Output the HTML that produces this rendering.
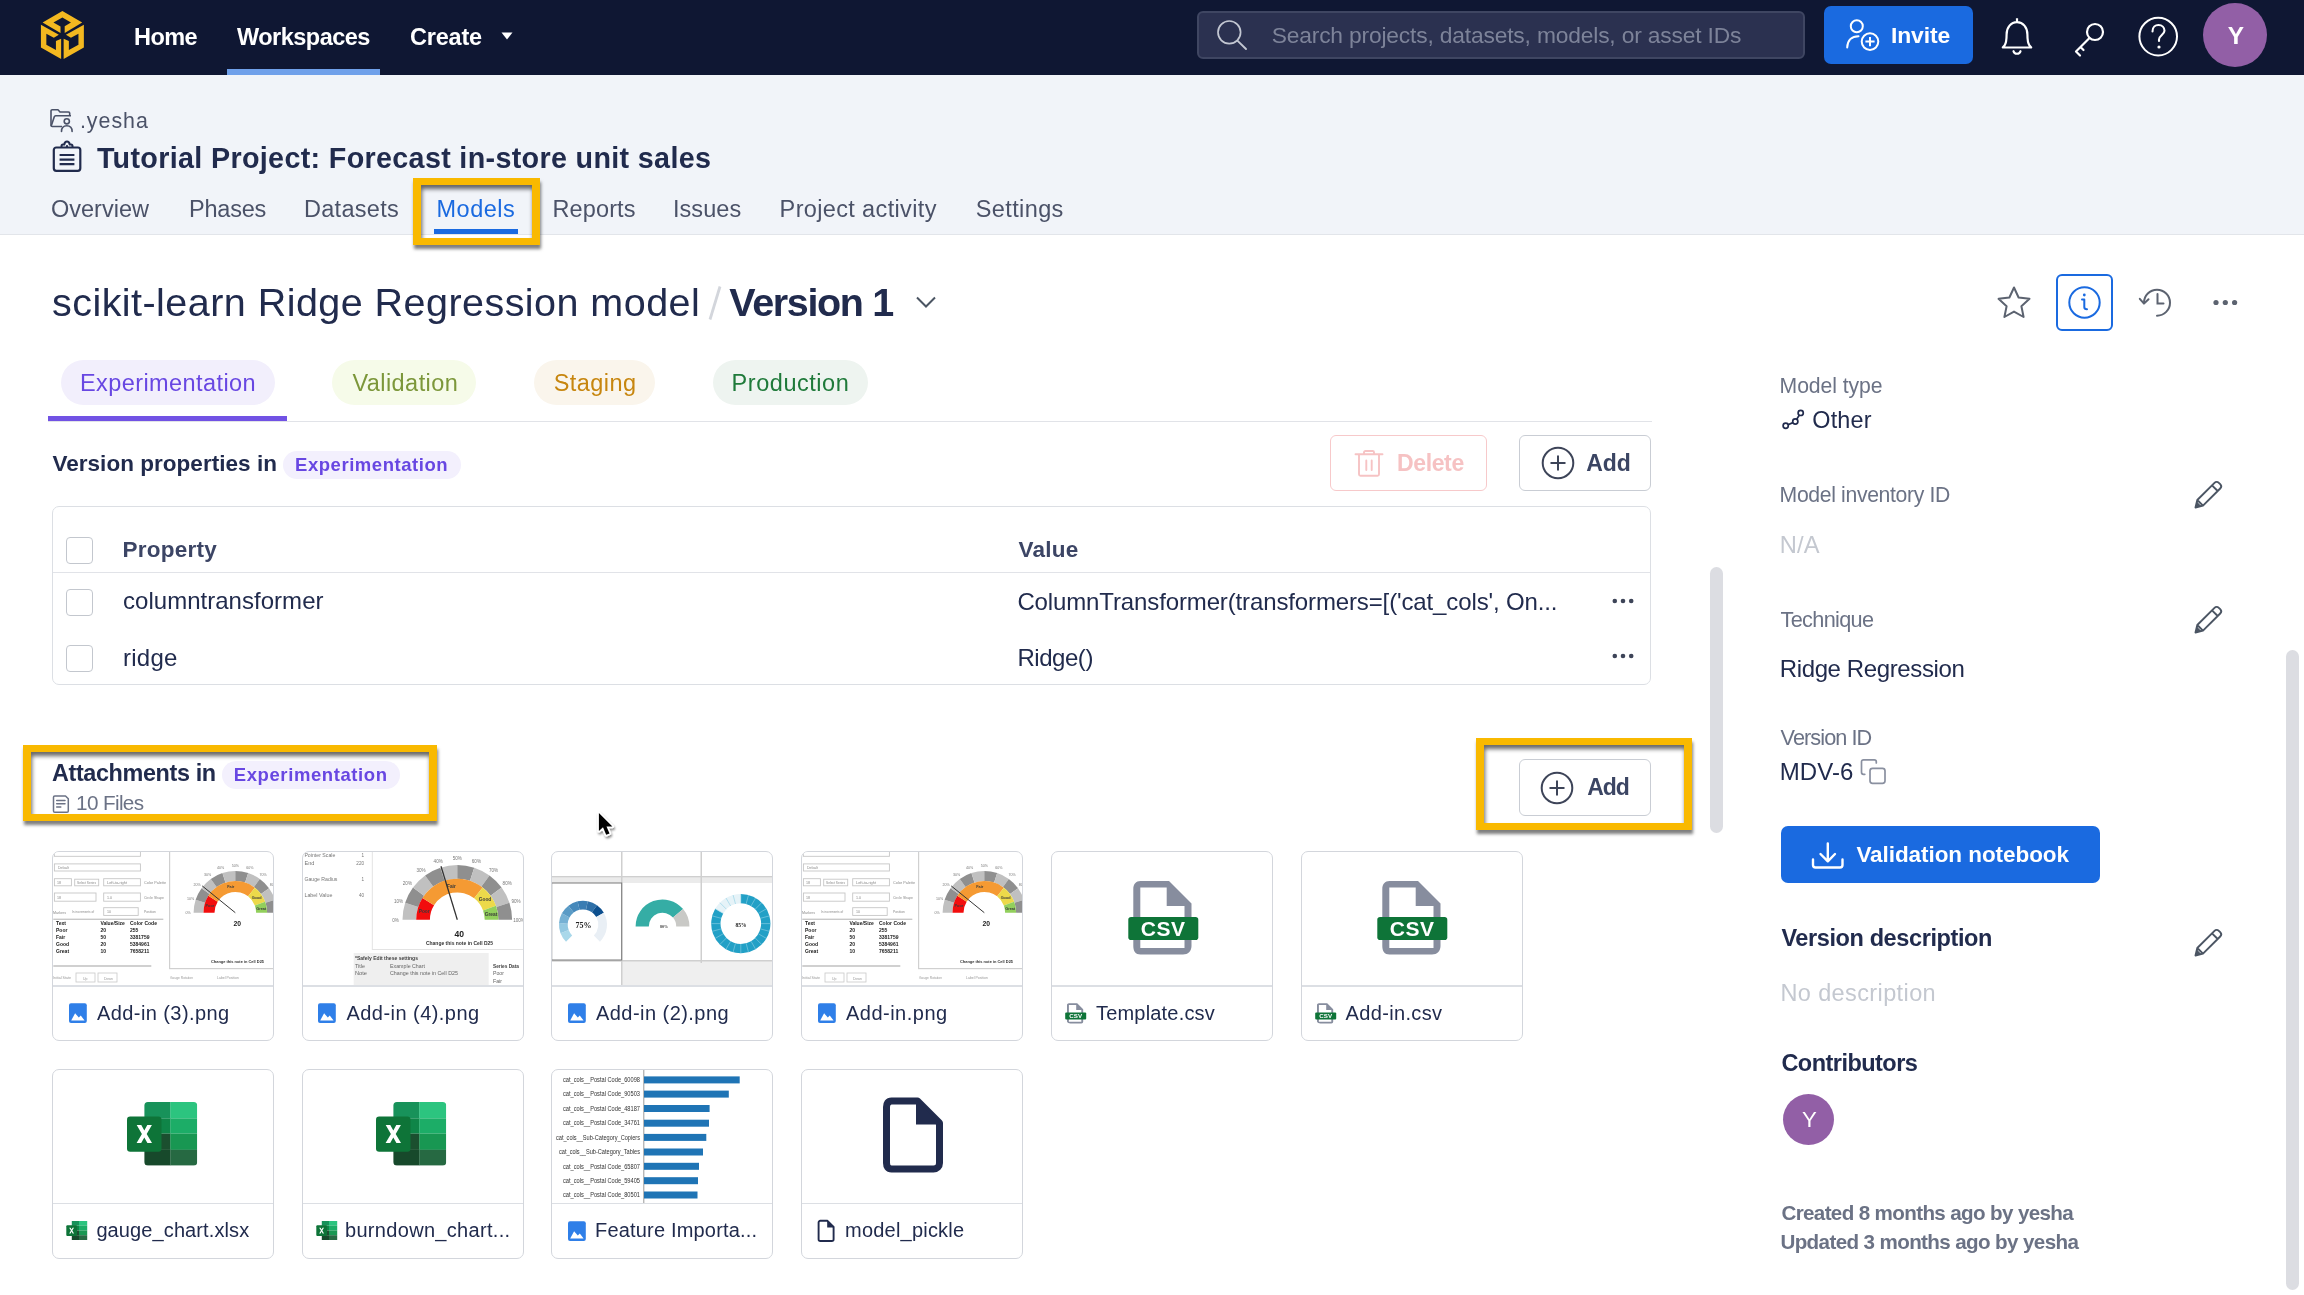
<!DOCTYPE html>
<html><head><meta charset="utf-8"><title>Model version</title>
<style>
html,body{margin:0;padding:0;width:2304px;height:1295px;overflow:hidden;background:#fff;font-family:"Liberation Sans",sans-serif}
.t{position:absolute;white-space:nowrap}
svg{display:block}
</style></head><body>
<div style="position:absolute;left:0;top:0;width:2304px;height:1295px;will-change:transform"><div style="position:absolute;left:0;top:0;width:2304px;height:75px;background:#0f1733"></div><svg style="position:absolute;left:38px;top:8px" width="50" height="54" viewBox="0 0 1199 1295">
<g fill="#f3b820">
<path d="M585 70 L1060 350 L640 598 L640 435 L790 350 L585 225 L370 350 L540 445 L540 598 L110 350 Z"/>
<path d="M70 400 L500 640 L380 715 L200 620 L200 880 L430 1005 L430 790 L555 735 L555 1225 L70 945 Z"/>
<path d="M1100 400 L670 640 L790 715 L970 620 L970 880 L740 1005 L740 790 L615 735 L615 1225 L1100 945 Z"/>
</g></svg><svg style="position:absolute;left:500px;top:31px" width="14" height="10" viewBox="0 0 14 10"><path d="M1.5 1.5 L12.5 1.5 L7 8.5 Z" fill="#fff"/></svg><div style="position:absolute;left:227px;top:69px;width:153px;height:6px;background:#6fa0ea"></div><div style="position:absolute;left:1197px;top:11px;width:604px;height:44px;background:#2b3150;border:2px solid #3f4662;border-radius:6px"></div><svg style="position:absolute;left:1210px;top:14px" width="44" height="40" viewBox="0 0 44 40"><circle cx="19.3" cy="18.3" r="11.3" fill="none" stroke="#c3c7d2" stroke-width="1.7"/><path d="M27.4 26.6 L36 35" stroke="#c3c7d2" stroke-width="1.9" stroke-linecap="round"/></svg><div style="position:absolute;left:1824px;top:6px;width:149px;height:58px;background:#1a6ae0;border-radius:7px"></div><svg style="position:absolute;left:1844px;top:17px" width="40" height="38" viewBox="0 0 40 38">
<circle cx="12.8" cy="9.3" r="6" fill="none" stroke="#fff" stroke-width="2"/>
<path d="M3.2 30.5 C3.5 23 8 19.2 14.5 19.2" fill="none" stroke="#fff" stroke-width="2" stroke-linecap="round"/>
<circle cx="26" cy="24.6" r="8.3" fill="none" stroke="#fff" stroke-width="2"/>
<path d="M26 20 V29.2 M21.4 24.6 H30.6" stroke="#fff" stroke-width="2"/></svg><svg style="position:absolute;left:1998px;top:15px" width="38" height="44" viewBox="0 0 38 44">
<path d="M19 3.2 V6.8 M4.8 32.5 L6.5 30.5 C8.2 28.3 8.6 25.5 8.6 19.5 C8.6 12.2 13 7.2 19 7.2 C25 7.2 29.4 12.2 29.4 19.5 C29.4 25.5 29.8 28.3 31.5 30.5 L33.2 32.5 Z" fill="none" stroke="#fff" stroke-width="2.2" stroke-linejoin="round"/>
<path d="M15.5 36.2 C16.5 39.6 21.5 39.6 22.5 36.2" fill="none" stroke="#fff" stroke-width="2.2" stroke-linecap="round"/></svg><svg style="position:absolute;left:2070px;top:18px" width="40" height="40" viewBox="0 0 40 40">
<circle cx="25" cy="14" r="8" fill="none" stroke="#fff" stroke-width="2.2"/>
<path d="M19.5 20 L6 33.5 M6 33.5 L10 37.5 M10.5 29 L13.5 32" fill="none" stroke="#fff" stroke-width="2.2" stroke-linecap="round"/></svg><svg style="position:absolute;left:2136px;top:14px" width="46" height="46" viewBox="0 0 46 46">
<circle cx="22.2" cy="22.6" r="18.8" fill="none" stroke="#fff" stroke-width="2"/>
<path d="M16.5 17.5 C16.5 13 19.5 11 22.5 11 C26 11 28.5 13.5 28.5 16.8 C28.5 20.5 23 21.5 23 25.5 V27" fill="none" stroke="#fff" stroke-width="2.1" stroke-linecap="round"/>
<circle cx="23" cy="33" r="1.6" fill="#fff"/></svg><div style="position:absolute;left:2203px;top:3px;width:64px;height:64px;border-radius:50%;background:#925fa6"></div><div style="position:absolute;left:0;top:75px;width:2304px;height:159px;background:#f1f4f9;border-bottom:1px solid #e2e5ea"></div><svg style="position:absolute;left:49px;top:107px" width="28" height="26" viewBox="0 0 28 26">
<path d="M13 19.5 H3.2 C2.5 19.5 2 19 2 18.3 V4 C2 3.3 2.5 2.8 3.2 2.8 H9 L11 5 H19.5 C20.2 5 20.7 5.5 20.7 6.2 V8.5" fill="none" stroke="#4b5268" stroke-width="1.6" stroke-linejoin="round"/>
<path d="M2.2 19 L5.3 9.8 C5.5 9.2 6 8.8 6.7 8.8 H22" fill="none" stroke="#4b5268" stroke-width="1.6" stroke-linejoin="round"/>
<circle cx="17.8" cy="14.3" r="2.6" fill="none" stroke="#4b5268" stroke-width="1.6"/>
<path d="M12.5 24.5 C12.5 20.8 14.8 18.8 17.8 18.8 C20.8 18.8 23.1 20.8 23.1 24.5" fill="none" stroke="#4b5268" stroke-width="1.6" stroke-linecap="round"/>
</svg><svg style="position:absolute;left:50px;top:139px" width="34" height="35" viewBox="0 0 34 35">
<rect x="3.8" y="8.5" width="26.5" height="23.3" rx="2.5" fill="none" stroke="#212b4d" stroke-width="2.2"/>
<path d="M11.5 8.5 V7 C11.5 6 12.2 5.5 13 5.5 H14.3 C14.6 3.6 15.6 2.6 17 2.6 C18.4 2.6 19.4 3.6 19.7 5.5 H21 C21.8 5.5 22.5 6 22.5 7 V8.5" fill="none" stroke="#212b4d" stroke-width="2" stroke-linejoin="round"/>
<circle cx="17" cy="7.2" r="1.1" fill="#212b4d"/>
<path d="M9.6 16 H24.4 M9.6 20.6 H24.4 M9.6 25.2 H24.4" stroke="#212b4d" stroke-width="2.2"/>
</svg><div style="position:absolute;left:434px;top:229px;width:84px;height:5px;background:#1a6ae0"></div><svg style="position:absolute;left:700px;top:280px" width="30" height="46" viewBox="0 0 30 46"><path d="M20 6.5 L10 39.5" stroke="#d3d6dc" stroke-width="2.8"/></svg><svg style="position:absolute;left:912px;top:292px" width="28" height="20" viewBox="0 0 28 20"><path d="M5 5.5 L14 14.5 L23 5.5" fill="none" stroke="#4b5563" stroke-width="2"/></svg><svg style="position:absolute;left:1992px;top:282px" width="44" height="44" viewBox="0 0 44 44">
<path d="M22 5.5 L26.6 15.5 L37.5 16.8 L29.4 24.2 L31.6 35 L22 29.6 L12.4 35 L14.6 24.2 L6.5 16.8 L17.4 15.5 Z" fill="none" stroke="#5c6370" stroke-width="2" stroke-linejoin="round"/></svg><div style="position:absolute;left:2056px;top:274px;width:53px;height:53px;border:2px solid #1a6ae0;border-radius:6px"></div><svg style="position:absolute;left:2064px;top:282px" width="41" height="41" viewBox="0 0 41 41">
<circle cx="20.5" cy="20.5" r="15.2" fill="none" stroke="#1a6ae0" stroke-width="2"/>
<circle cx="20.3" cy="13" r="1.4" fill="#1a6ae0"/>
<path d="M18 17.5 H20.3 V25 C20.3 26.6 21.2 27.2 23 27.2" fill="none" stroke="#1a6ae0" stroke-width="2" stroke-linecap="round" stroke-linejoin="round"/></svg><svg style="position:absolute;left:2134px;top:283px" width="42" height="40" viewBox="0 0 42 40">
<path d="M10 19.7 A13 13 0 1 1 23 32.7" fill="none" stroke="#5c6370" stroke-width="2" stroke-linecap="round"/>
<path d="M5.8 15.8 L10 20.6 L14.5 16.2" fill="none" stroke="#5c6370" stroke-width="2" stroke-linecap="round" stroke-linejoin="round"/>
<path d="M23.5 11 V20.5 H29.5" fill="none" stroke="#5c6370" stroke-width="2" stroke-linecap="round"/></svg><svg style="position:absolute;left:2208px;top:294px" width="34" height="16" viewBox="0 0 34 16">
<circle cx="8" cy="8.5" r="2.6" fill="#5c6370"/><circle cx="17.3" cy="8.5" r="2.6" fill="#5c6370"/><circle cx="26.6" cy="8.5" r="2.6" fill="#5c6370"/></svg><div style="position:absolute;left:61px;top:360px;width:214px;height:45px;border-radius:23px;background:#f2effc"></div><div style="position:absolute;left:332px;top:360px;width:144px;height:45px;border-radius:23px;background:#f6fbe9"></div><div style="position:absolute;left:534px;top:360px;width:121px;height:45px;border-radius:23px;background:#faf5ec"></div><div style="position:absolute;left:713px;top:360px;width:155px;height:45px;border-radius:23px;background:#eef4f0"></div><div style="position:absolute;left:48px;top:421px;width:1604px;height:1px;background:#e1e3e8"></div><div style="position:absolute;left:48px;top:416px;width:239px;height:5px;background:#7152e4"></div><div style="position:absolute;left:283px;top:451px;width:178px;height:28px;border-radius:14px;background:#f3f0fd"></div><div style="position:absolute;left:1330px;top:435px;width:155px;height:54px;border:1.5px solid #f7c9ca;border-radius:6px"></div><svg style="position:absolute;left:1352px;top:448px" width="34" height="32" viewBox="0 0 34 32">
<path d="M3.5 6.3 H30.5 M12 6.3 V4.3 C12 3.5 12.6 3 13.4 3 H20.6 C21.4 3 22 3.5 22 4.3 V6.3 M7 6.3 V26.3 C7 27.2 7.6 27.8 8.5 27.8 H25.5 C26.4 27.8 27 27.2 27 26.3 V6.3 M14.3 12.5 V22 M19.7 12.5 V22" fill="none" stroke="#f6c3c4" stroke-width="1.9" stroke-linecap="round"/></svg><div style="position:absolute;left:1519px;top:435px;width:130px;height:54px;border:1.5px solid #c9cdd4;border-radius:6px;background:#fff"></div><svg style="position:absolute;left:1537.7px;top:443px" width="40" height="40" viewBox="0 0 40 40">
<circle cx="20" cy="20" r="15.3" fill="none" stroke="#3d4458" stroke-width="2"/>
<path d="M20 12.5 V27.5 M12.5 20 H27.5" stroke="#3d4458" stroke-width="2"/></svg><div style="position:absolute;left:52px;top:505.5px;width:1596.5px;height:177px;border:1.5px solid #dcdfe4;border-radius:7px"></div><div style="position:absolute;left:53px;top:571.5px;width:1597px;height:1.2px;background:#e1e3e8"></div><div style="position:absolute;left:66px;top:536.5px;width:25px;height:25px;border:1.7px solid #c3c7ce;border-radius:4px;background:#fff"></div><div style="position:absolute;left:66px;top:589px;width:25px;height:25px;border:1.7px solid #c3c7ce;border-radius:4px;background:#fff"></div><div style="position:absolute;left:66px;top:645px;width:25px;height:25px;border:1.7px solid #c3c7ce;border-radius:4px;background:#fff"></div><svg style="position:absolute;left:1608px;top:592.6px" width="30" height="16" viewBox="0 0 30 16">
<circle cx="6.8" cy="8" r="2.3" fill="#3d4458"/><circle cx="15" cy="8" r="2.3" fill="#3d4458"/><circle cx="23.2" cy="8" r="2.3" fill="#3d4458"/></svg><svg style="position:absolute;left:1608px;top:648px" width="30" height="16" viewBox="0 0 30 16">
<circle cx="6.8" cy="8" r="2.3" fill="#3d4458"/><circle cx="15" cy="8" r="2.3" fill="#3d4458"/><circle cx="23.2" cy="8" r="2.3" fill="#3d4458"/></svg><div style="position:absolute;left:222px;top:761px;width:178px;height:28px;border-radius:14px;background:#f3f0fd"></div><svg style="position:absolute;left:50px;top:793px" width="22" height="22" viewBox="0 0 22 22">
<path d="M4.8 3 H15.5 L18.3 5.8 V18 C18.3 18.8 17.8 19.3 17 19.3 H4.8 C4 19.3 3.5 18.8 3.5 18 V4.3 C3.5 3.5 4 3 4.8 3 Z" fill="none" stroke="#6b7285" stroke-width="1.5" stroke-linejoin="round"/>
<path d="M6.7 7.5 H15 M6.7 10.7 H15 M6.7 13.9 H10.8" stroke="#6b7285" stroke-width="1.5" stroke-linecap="round"/></svg><div style="position:absolute;left:1519px;top:758.5px;width:130px;height:55px;border:1.5px solid #c9cdd4;border-radius:6px;background:#fff"></div><svg style="position:absolute;left:1536.9px;top:768px" width="40" height="40" viewBox="0 0 40 40">
<circle cx="20" cy="20" r="15.3" fill="none" stroke="#3d4458" stroke-width="2"/>
<path d="M20 12.5 V27.5 M12.5 20 H27.5" stroke="#3d4458" stroke-width="2"/></svg><div style="position:absolute;left:1710px;top:567px;width:13px;height:266px;border-radius:7px;background:#dcdde2"></div><div style="position:absolute;left:2286px;top:650px;width:13px;height:640px;border-radius:7px;background:#dcdde2"></div><div style="position:absolute;left:52px;top:851px;width:220px;height:188px;border:1.5px solid #d3d6dc;border-radius:7px;overflow:hidden;background:#fff"><svg style="position:absolute;left:-1.5px;top:-1.5px;filter:blur(0.35px)" width="223" height="135" viewBox="0 0 223 135"><rect x="2.4" y="0.3" width="86" height="5" fill="#fff" stroke="#c6c6c6" stroke-width="0.9"/><rect x="2.4" y="12.9" width="86" height="7.1" fill="#fff" stroke="#c6c6c6" stroke-width="0.9"/><rect x="2.4" y="27.7" width="17" height="7.1" fill="#fff" stroke="#c6c6c6" stroke-width="0.9"/><rect x="22.7" y="28.2" width="24" height="6.6" fill="#fff" stroke="#c6c6c6" stroke-width="0.9"/><rect x="51.7" y="27.7" width="36.7" height="7.1" fill="#fff" stroke="#c6c6c6" stroke-width="0.9"/><rect x="2.4" y="42" width="41.6" height="8.2" fill="#fff" stroke="#c6c6c6" stroke-width="0.9"/><rect x="51.7" y="42" width="36.7" height="8.2" fill="#fff" stroke="#c6c6c6" stroke-width="0.9"/><rect x="51.7" y="56.7" width="34.5" height="7.7" fill="#fff" stroke="#c6c6c6" stroke-width="0.9"/><text x="6" y="17.8" font-family="Liberation Sans" font-size="3.6" font-weight="400" fill="#8a8a8a" text-anchor="start" textLength="11" lengthAdjust="spacingAndGlyphs">Default</text><text x="5" y="32.8" font-family="Liberation Sans" font-size="3.6" font-weight="400" fill="#8a8a8a" text-anchor="start" textLength="4" lengthAdjust="spacingAndGlyphs">18</text><text x="25" y="33" font-family="Liberation Sans" font-size="3.6" font-weight="400" fill="#8a8a8a" text-anchor="start" textLength="19" lengthAdjust="spacingAndGlyphs">Select Series</text><text x="55" y="32.8" font-family="Liberation Sans" font-size="3.6" font-weight="400" fill="#8a8a8a" text-anchor="start" textLength="20" lengthAdjust="spacingAndGlyphs">Left-to-right</text><text x="5" y="47.5" font-family="Liberation Sans" font-size="3.6" font-weight="400" fill="#8a8a8a" text-anchor="start" textLength="4" lengthAdjust="spacingAndGlyphs">18</text><text x="55" y="47.5" font-family="Liberation Sans" font-size="3.6" font-weight="400" fill="#8a8a8a" text-anchor="start" textLength="5" lengthAdjust="spacingAndGlyphs">1.0</text><text x="55" y="62" font-family="Liberation Sans" font-size="3.6" font-weight="400" fill="#8a8a8a" text-anchor="start" textLength="4" lengthAdjust="spacingAndGlyphs">10</text><text x="1" y="62.5" font-family="Liberation Sans" font-size="3.6" font-weight="400" fill="#8a8a8a" text-anchor="start" textLength="13" lengthAdjust="spacingAndGlyphs">Markers</text><text x="20" y="62.3" font-family="Liberation Sans" font-size="3.6" font-weight="400" fill="#8a8a8a" text-anchor="start" textLength="22" lengthAdjust="spacingAndGlyphs">In increments of</text><text x="92" y="33" font-family="Liberation Sans" font-size="3.6" font-weight="400" fill="#8a8a8a" text-anchor="start" textLength="22" lengthAdjust="spacingAndGlyphs">Color Palette</text><text x="92" y="47.5" font-family="Liberation Sans" font-size="3.6" font-weight="400" fill="#8a8a8a" text-anchor="start" textLength="20" lengthAdjust="spacingAndGlyphs">Circle Shape</text><text x="92" y="62" font-family="Liberation Sans" font-size="3.6" font-weight="400" fill="#8a8a8a" text-anchor="start" textLength="12" lengthAdjust="spacingAndGlyphs">Position</text><rect x="1.3" y="67.6" width="110" height="1.4" fill="#c8c8c8"/><text x="4" y="74.4" font-family="Liberation Sans" font-size="5" font-weight="700" fill="#222" text-anchor="start">Text</text><text x="48.4" y="74.4" font-family="Liberation Sans" font-size="5" font-weight="700" fill="#222" text-anchor="start">Value/Size</text><text x="78" y="74.4" font-family="Liberation Sans" font-size="5" font-weight="700" fill="#222" text-anchor="start">Color Code</text><text x="4" y="81.4" font-family="Liberation Sans" font-size="5" font-weight="700" fill="#222" text-anchor="start">Poor</text><text x="48.4" y="81.4" font-family="Liberation Sans" font-size="5" font-weight="700" fill="#222" text-anchor="start">20</text><text x="78" y="81.4" font-family="Liberation Sans" font-size="5" font-weight="700" fill="#222" text-anchor="start">255</text><text x="4" y="88.4" font-family="Liberation Sans" font-size="5" font-weight="700" fill="#222" text-anchor="start">Fair</text><text x="48.4" y="88.4" font-family="Liberation Sans" font-size="5" font-weight="700" fill="#222" text-anchor="start">50</text><text x="78" y="88.4" font-family="Liberation Sans" font-size="5" font-weight="700" fill="#222" text-anchor="start">3381759</text><text x="4" y="95.4" font-family="Liberation Sans" font-size="5" font-weight="700" fill="#222" text-anchor="start">Good</text><text x="48.4" y="95.4" font-family="Liberation Sans" font-size="5" font-weight="700" fill="#222" text-anchor="start">20</text><text x="78" y="95.4" font-family="Liberation Sans" font-size="5" font-weight="700" fill="#222" text-anchor="start">5384961</text><text x="4" y="102.4" font-family="Liberation Sans" font-size="5" font-weight="700" fill="#222" text-anchor="start">Great</text><text x="48.4" y="102.4" font-family="Liberation Sans" font-size="5" font-weight="700" fill="#222" text-anchor="start">10</text><text x="78" y="102.4" font-family="Liberation Sans" font-size="5" font-weight="700" fill="#222" text-anchor="start">7658211</text><rect x="1.3" y="114.3" width="98" height="1.4" fill="#bdbdbd"/><rect x="24" y="122" width="19" height="9" fill="#fff" stroke="#c9c9c9" stroke-width="0.8"/><rect x="46" y="122" width="19" height="9" fill="#fff" stroke="#c9c9c9" stroke-width="0.8"/><text x="1" y="127.5" font-family="Liberation Sans" font-size="3.5" font-weight="400" fill="#999" text-anchor="start" textLength="18" lengthAdjust="spacingAndGlyphs">Initial State</text><text x="31" y="128.5" font-family="Liberation Sans" font-size="3.5" font-weight="400" fill="#999" text-anchor="start">Up</text><text x="52" y="128.5" font-family="Liberation Sans" font-size="3.5" font-weight="400" fill="#999" text-anchor="start">Down</text><rect x="117" y="0" width="1.2" height="118" fill="#d0d0d0"/><rect x="117" y="117" width="106" height="1.2" fill="#d0d0d0"/><text x="118" y="127.5" font-family="Liberation Sans" font-size="3.5" font-weight="400" fill="#999" text-anchor="start" textLength="23" lengthAdjust="spacingAndGlyphs">Gauge Rotation</text><text x="165" y="127.5" font-family="Liberation Sans" font-size="3.5" font-weight="400" fill="#999" text-anchor="start" textLength="22" lengthAdjust="spacingAndGlyphs">Label Position</text><path d="M141.60 61.70 A41.7 41.7 0 0 1 143.64 48.81 L153.06 51.87 A31.8 31.8 0 0 0 151.50 61.70 Z" fill="#c0c0c0"/><path d="M143.64 48.81 A41.7 41.7 0 0 1 149.56 37.19 L157.57 43.01 A31.8 31.8 0 0 0 153.06 51.87 Z" fill="#8f8f8f"/><path d="M149.56 37.19 A41.7 41.7 0 0 1 158.79 27.96 L164.61 35.97 A31.8 31.8 0 0 0 157.57 43.01 Z" fill="#c0c0c0"/><path d="M158.79 27.96 A41.7 41.7 0 0 1 170.41 22.04 L173.47 31.46 A31.8 31.8 0 0 0 164.61 35.97 Z" fill="#8f8f8f"/><path d="M170.41 22.04 A41.7 41.7 0 0 1 183.30 20.00 L183.30 29.90 A31.8 31.8 0 0 0 173.47 31.46 Z" fill="#c0c0c0"/><path d="M183.30 20.00 A41.7 41.7 0 0 1 196.19 22.04 L193.13 31.46 A31.8 31.8 0 0 0 183.30 29.90 Z" fill="#8f8f8f"/><path d="M196.19 22.04 A41.7 41.7 0 0 1 207.81 27.96 L201.99 35.97 A31.8 31.8 0 0 0 193.13 31.46 Z" fill="#c0c0c0"/><path d="M207.81 27.96 A41.7 41.7 0 0 1 217.04 37.19 L209.03 43.01 A31.8 31.8 0 0 0 201.99 35.97 Z" fill="#8f8f8f"/><path d="M217.04 37.19 A41.7 41.7 0 0 1 222.96 48.81 L213.54 51.87 A31.8 31.8 0 0 0 209.03 43.01 Z" fill="#c0c0c0"/><path d="M222.96 48.81 A41.7 41.7 0 0 1 225.00 61.70 L215.10 61.70 A31.8 31.8 0 0 0 213.54 51.87 Z" fill="#8f8f8f"/><path d="M151.50 61.70 A31.8 31.8 0 0 1 156.33 44.85 L165.66 50.68 A20.8 20.8 0 0 0 162.50 61.70 Z" fill="#f20d0d"/><path d="M156.33 44.85 A31.8 31.8 0 0 1 202.88 36.64 L196.11 45.31 A20.8 20.8 0 0 0 165.66 50.68 Z" fill="#f59a33"/><path d="M202.88 36.64 A31.8 31.8 0 0 1 213.18 50.82 L202.85 54.59 A20.8 20.8 0 0 0 196.11 45.31 Z" fill="#ecd94a"/><path d="M213.18 50.82 A31.8 31.8 0 0 1 215.10 61.70 L204.10 61.70 A20.8 20.8 0 0 0 202.85 54.59 Z" fill="#92cf5c"/><text x="157.9" y="56.2" font-family="Liberation Sans" font-size="3.8" font-weight="700" fill="#3a3a3a" text-anchor="middle">Poor</text><text x="178.7" y="37.1" font-family="Liberation Sans" font-size="3.8" font-weight="700" fill="#3a3a3a" text-anchor="middle">Fair</text><text x="204.6" y="47.6" font-family="Liberation Sans" font-size="3.8" font-weight="700" fill="#3a3a3a" text-anchor="middle">Good</text><text x="209.2" y="58.5" font-family="Liberation Sans" font-size="3.8" font-weight="700" fill="#3a3a3a" text-anchor="middle">Great</text><path d="M183.3 61.7 L150.2 34.9" stroke="#333" stroke-width="0.99"/><text x="185.3" y="74.5" font-family="Liberation Sans" font-size="6.8" font-weight="700" fill="#222" text-anchor="middle">20</text><text x="136.2" y="63.0" font-family="Liberation Sans" font-size="3.6" font-weight="400" fill="#777" text-anchor="middle">0%</text><text x="138.5" y="48.5" font-family="Liberation Sans" font-size="3.6" font-weight="400" fill="#777" text-anchor="middle">10%</text><text x="145.2" y="35.4" font-family="Liberation Sans" font-size="3.6" font-weight="400" fill="#777" text-anchor="middle">20%</text><text x="155.6" y="24.9" font-family="Liberation Sans" font-size="3.6" font-weight="400" fill="#777" text-anchor="middle">30%</text><text x="168.7" y="18.3" font-family="Liberation Sans" font-size="3.6" font-weight="400" fill="#777" text-anchor="middle">40%</text><text x="183.3" y="16.0" font-family="Liberation Sans" font-size="3.6" font-weight="400" fill="#777" text-anchor="middle">50%</text><text x="197.9" y="18.3" font-family="Liberation Sans" font-size="3.6" font-weight="400" fill="#777" text-anchor="middle">60%</text><text x="211.0" y="24.9" font-family="Liberation Sans" font-size="3.6" font-weight="400" fill="#777" text-anchor="middle">70%</text><text x="221.4" y="35.4" font-family="Liberation Sans" font-size="3.6" font-weight="400" fill="#777" text-anchor="middle">80%</text><text x="228.1" y="48.5" font-family="Liberation Sans" font-size="3.6" font-weight="400" fill="#777" text-anchor="middle">90%</text><text x="230.4" y="63.1" font-family="Liberation Sans" font-size="3.6" font-weight="400" fill="#777" text-anchor="middle">100%</text><text x="159" y="112" font-family="Liberation Sans" font-size="4" font-weight="700" fill="#333" text-anchor="start" textLength="53" lengthAdjust="spacingAndGlyphs">Change this note in Cell D25</text></svg><div style="position:absolute;left:0;top:133px;width:223px;height:1.5px;background:#dcdfe4"></div></div><div style="position:absolute;left:302px;top:851px;width:220px;height:188px;border:1.5px solid #d3d6dc;border-radius:7px;overflow:hidden;background:#fff"><svg style="position:absolute;left:-1.5px;top:-1.5px;filter:blur(0.35px)" width="223" height="135" viewBox="0 0 223 135"><text x="2.4" y="6" font-family="Liberation Sans" font-size="4.6" font-weight="400" fill="#777" text-anchor="start" textLength="31" lengthAdjust="spacingAndGlyphs">Pointer Scale</text><text x="62" y="6" font-family="Liberation Sans" font-size="4.6" font-weight="400" fill="#777" text-anchor="end">1</text><text x="2.4" y="13.8" font-family="Liberation Sans" font-size="4.6" font-weight="400" fill="#777" text-anchor="start" textLength="10" lengthAdjust="spacingAndGlyphs">End</text><text x="62" y="13.8" font-family="Liberation Sans" font-size="4.6" font-weight="400" fill="#777" text-anchor="end">220</text><text x="2.4" y="29.7" font-family="Liberation Sans" font-size="4.6" font-weight="400" fill="#777" text-anchor="start" textLength="33" lengthAdjust="spacingAndGlyphs">Gauge Radius</text><text x="62" y="29.7" font-family="Liberation Sans" font-size="4.6" font-weight="400" fill="#777" text-anchor="end">1</text><text x="2.4" y="45.6" font-family="Liberation Sans" font-size="4.6" font-weight="400" fill="#777" text-anchor="start" textLength="28" lengthAdjust="spacingAndGlyphs">Label Value</text><text x="62" y="45.6" font-family="Liberation Sans" font-size="4.6" font-weight="400" fill="#777" text-anchor="end">40</text><rect x="69.8" y="0" width="1" height="98" fill="#e3e3e3"/><rect x="69.8" y="98" width="153" height="1" fill="#e3e3e3"/><path d="M100.50 68.80 A54.8 54.8 0 0 1 103.18 51.87 L116.21 56.10 A41.1 41.1 0 0 0 114.20 68.80 Z" fill="#c0c0c0"/><path d="M103.18 51.87 A54.8 54.8 0 0 1 110.97 36.59 L122.05 44.64 A41.1 41.1 0 0 0 116.21 56.10 Z" fill="#8f8f8f"/><path d="M110.97 36.59 A54.8 54.8 0 0 1 123.09 24.47 L131.14 35.55 A41.1 41.1 0 0 0 122.05 44.64 Z" fill="#c0c0c0"/><path d="M123.09 24.47 A54.8 54.8 0 0 1 138.37 16.68 L142.60 29.71 A41.1 41.1 0 0 0 131.14 35.55 Z" fill="#8f8f8f"/><path d="M138.37 16.68 A54.8 54.8 0 0 1 155.30 14.00 L155.30 27.70 A41.1 41.1 0 0 0 142.60 29.71 Z" fill="#c0c0c0"/><path d="M155.30 14.00 A54.8 54.8 0 0 1 172.23 16.68 L168.00 29.71 A41.1 41.1 0 0 0 155.30 27.70 Z" fill="#8f8f8f"/><path d="M172.23 16.68 A54.8 54.8 0 0 1 187.51 24.47 L179.46 35.55 A41.1 41.1 0 0 0 168.00 29.71 Z" fill="#c0c0c0"/><path d="M187.51 24.47 A54.8 54.8 0 0 1 199.63 36.59 L188.55 44.64 A41.1 41.1 0 0 0 179.46 35.55 Z" fill="#8f8f8f"/><path d="M199.63 36.59 A54.8 54.8 0 0 1 207.42 51.87 L194.39 56.10 A41.1 41.1 0 0 0 188.55 44.64 Z" fill="#c0c0c0"/><path d="M207.42 51.87 A54.8 54.8 0 0 1 210.10 68.80 L196.40 68.80 A41.1 41.1 0 0 0 194.39 56.10 Z" fill="#8f8f8f"/><path d="M114.20 68.80 A41.1 41.1 0 0 1 120.45 47.02 L132.06 54.28 A27.4 27.4 0 0 0 127.90 68.80 Z" fill="#f20d0d"/><path d="M120.45 47.02 A41.1 41.1 0 0 1 180.60 36.41 L172.17 47.21 A27.4 27.4 0 0 0 132.06 54.28 Z" fill="#f59a33"/><path d="M180.60 36.41 A41.1 41.1 0 0 1 193.92 54.74 L181.05 59.43 A27.4 27.4 0 0 0 172.17 47.21 Z" fill="#ecd94a"/><path d="M193.92 54.74 A41.1 41.1 0 0 1 196.40 68.80 L182.70 68.80 A27.4 27.4 0 0 0 181.05 59.43 Z" fill="#92cf5c"/><text x="122.2" y="61.7" font-family="Liberation Sans" font-size="4.8" font-weight="700" fill="#3a3a3a" text-anchor="middle">Poor</text><text x="149.4" y="36.8" font-family="Liberation Sans" font-size="4.8" font-weight="700" fill="#3a3a3a" text-anchor="middle">Fair</text><text x="183.0" y="50.4" font-family="Liberation Sans" font-size="4.8" font-weight="700" fill="#3a3a3a" text-anchor="middle">Good</text><text x="189.0" y="64.6" font-family="Liberation Sans" font-size="4.8" font-weight="700" fill="#3a3a3a" text-anchor="middle">Great</text><path d="M155.3 68.8 L139.0 15.3" stroke="#333" stroke-width="1.26"/><text x="157.3" y="85.5" font-family="Liberation Sans" font-size="8.6" font-weight="700" fill="#222" text-anchor="middle">40</text><text x="93.6" y="70.5" font-family="Liberation Sans" font-size="4.6" font-weight="400" fill="#777" text-anchor="middle">0%</text><text x="96.6" y="51.5" font-family="Liberation Sans" font-size="4.6" font-weight="400" fill="#777" text-anchor="middle">10%</text><text x="105.4" y="34.3" font-family="Liberation Sans" font-size="4.6" font-weight="400" fill="#777" text-anchor="middle">20%</text><text x="119.0" y="20.6" font-family="Liberation Sans" font-size="4.6" font-weight="400" fill="#777" text-anchor="middle">30%</text><text x="136.2" y="11.8" font-family="Liberation Sans" font-size="4.6" font-weight="400" fill="#777" text-anchor="middle">40%</text><text x="155.3" y="8.8" font-family="Liberation Sans" font-size="4.6" font-weight="400" fill="#777" text-anchor="middle">50%</text><text x="174.4" y="11.8" font-family="Liberation Sans" font-size="4.6" font-weight="400" fill="#777" text-anchor="middle">60%</text><text x="191.6" y="20.6" font-family="Liberation Sans" font-size="4.6" font-weight="400" fill="#777" text-anchor="middle">70%</text><text x="205.2" y="34.3" font-family="Liberation Sans" font-size="4.6" font-weight="400" fill="#777" text-anchor="middle">80%</text><text x="214.0" y="51.5" font-family="Liberation Sans" font-size="4.6" font-weight="400" fill="#777" text-anchor="middle">90%</text><text x="217.0" y="70.5" font-family="Liberation Sans" font-size="4.6" font-weight="400" fill="#777" text-anchor="middle">100%</text><text x="124" y="93.5" font-family="Liberation Sans" font-size="5" font-weight="700" fill="#333" text-anchor="start" textLength="67" lengthAdjust="spacingAndGlyphs">Change this note in Cell D25</text><rect x="51.7" y="102" width="135" height="33" fill="#efefef"/><text x="53" y="109" font-family="Liberation Sans" font-size="4.6" font-weight="700" fill="#444" text-anchor="start" textLength="63" lengthAdjust="spacingAndGlyphs">*Safely Edit these settings</text><text x="53" y="116.5" font-family="Liberation Sans" font-size="4.6" font-weight="400" fill="#666" text-anchor="start" textLength="10" lengthAdjust="spacingAndGlyphs">Title</text><text x="88" y="116.5" font-family="Liberation Sans" font-size="4.6" font-weight="400" fill="#666" text-anchor="start" textLength="35" lengthAdjust="spacingAndGlyphs">Example Chart</text><text x="53" y="124" font-family="Liberation Sans" font-size="4.6" font-weight="400" fill="#666" text-anchor="start" textLength="12" lengthAdjust="spacingAndGlyphs">Note</text><text x="88" y="124" font-family="Liberation Sans" font-size="4.6" font-weight="400" fill="#666" text-anchor="start" textLength="68" lengthAdjust="spacingAndGlyphs">Change this note in Cell D25</text><text x="191" y="116.5" font-family="Liberation Sans" font-size="4.6" font-weight="700" fill="#444" text-anchor="start" textLength="26" lengthAdjust="spacingAndGlyphs">Series Data</text><text x="191" y="124" font-family="Liberation Sans" font-size="4.6" font-weight="400" fill="#666" text-anchor="start" textLength="11" lengthAdjust="spacingAndGlyphs">Poor</text><text x="191" y="131.5" font-family="Liberation Sans" font-size="4.6" font-weight="400" fill="#666" text-anchor="start" textLength="9" lengthAdjust="spacingAndGlyphs">Fair</text></svg><div style="position:absolute;left:0;top:133px;width:223px;height:1.5px;background:#dcdfe4"></div></div><div style="position:absolute;left:551px;top:851px;width:220px;height:188px;border:1.5px solid #d3d6dc;border-radius:7px;overflow:hidden;background:#fff"><svg style="position:absolute;left:-1.5px;top:-1.5px;filter:blur(0.35px)" width="223" height="135" viewBox="0 0 223 135"><rect x="0" y="26.5" width="223" height="5.5" fill="#ebebeb"/><rect x="0" y="110" width="223" height="24" fill="#efefef"/><rect x="0" y="111" width="70.4" height="23" fill="#fff"/><rect x="70" y="0" width="1.5" height="134" fill="#cfcfcf"/><rect x="149.5" y="0" width="1.5" height="112" fill="#cfcfcf"/><rect x="0" y="25" width="223" height="1.5" fill="#cfcfcf"/><rect x="0" y="109" width="223" height="1.5" fill="#cfcfcf"/><rect x="0.7" y="32" width="70" height="77" fill="none" stroke="#7a7a7a" stroke-width="1"/><path d="M15.03 90.67 A24 24 0 0 1 9.53 82.14 L17.68 79.08 A15.3 15.3 0 0 0 21.18 84.52 Z" fill="#a9d8ea"/><path d="M9.53 82.14 A24 24 0 0 1 8.05 72.11 L16.73 72.69 A15.3 15.3 0 0 0 17.68 79.08 Z" fill="#93c8e1"/><path d="M8.05 72.11 A24 24 0 0 1 10.85 62.36 L18.52 66.47 A15.3 15.3 0 0 0 16.73 72.69 Z" fill="#76b1d4"/><path d="M10.85 62.36 A24 24 0 0 1 17.42 54.63 L22.71 61.55 A15.3 15.3 0 0 0 18.52 66.47 Z" fill="#5a9bc6"/><path d="M17.42 54.63 A24 24 0 0 1 26.60 50.32 L28.56 58.79 A15.3 15.3 0 0 0 22.71 61.55 Z" fill="#4689bb"/><path d="M26.60 50.32 A24 24 0 0 1 36.74 50.17 L35.02 58.70 A15.3 15.3 0 0 0 28.56 58.79 Z" fill="#3a7db3"/><path d="M36.74 50.17 A24 24 0 0 1 46.04 54.23 L40.95 61.29 A15.3 15.3 0 0 0 35.02 58.70 Z" fill="#2f70a8"/><path d="M46.04 54.23 A24 24 0 0 1 52.83 61.77 L45.28 66.10 A15.3 15.3 0 0 0 40.95 61.29 Z" fill="#0c4f8e"/><path d="M52.83 61.77 A24 24 0 0 1 48.97 90.67 L42.82 84.52 A15.3 15.3 0 0 0 45.28 66.10 Z" fill="#e9eff5"/><text x="32.5" y="76.8" font-family="Liberation Serif" font-size="8.5" font-weight="700" fill="#222" text-anchor="middle" textLength="16" lengthAdjust="spacingAndGlyphs">75%</text><path d="M84.60 75.40 A26.9 26.9 0 0 1 132.11 58.11 L121.99 66.59 A13.7 13.7 0 0 0 97.80 75.40 Z" fill="#35ada5"/><path d="M132.11 58.11 A26.9 26.9 0 0 1 138.40 75.40 L125.20 75.40 A13.7 13.7 0 0 0 121.99 66.59 Z" fill="#c9c9c6"/><text x="113" y="77" font-family="Liberation Serif" font-size="5" font-weight="700" fill="#333" text-anchor="middle" textLength="8" lengthAdjust="spacingAndGlyphs">80%</text><path d="M189.80 43.00 A29.6 29.6 0 1 1 164.17 57.80 L172.22 62.45 A20.3 20.3 0 1 0 189.80 52.30 Z" fill="#22a0c6"/><path d="M164.17 57.80 A29.6 29.6 0 0 1 189.80 43.00 L189.80 52.30 A20.3 20.3 0 0 0 172.22 62.45 Z" fill="#e6f3f8"/><path d="M189.8 52.3 L189.8 43.0" stroke="#8fd0e4" stroke-width="0.6"/><path d="M195.1 53.0 L197.5 44.0" stroke="#8fd0e4" stroke-width="0.6"/><path d="M200.0 55.0 L204.6 47.0" stroke="#8fd0e4" stroke-width="0.6"/><path d="M204.2 58.2 L210.7 51.7" stroke="#8fd0e4" stroke-width="0.6"/><path d="M207.4 62.4 L215.4 57.8" stroke="#8fd0e4" stroke-width="0.6"/><path d="M209.4 67.3 L218.4 64.9" stroke="#8fd0e4" stroke-width="0.6"/><path d="M210.1 72.6 L219.4 72.6" stroke="#8fd0e4" stroke-width="0.6"/><path d="M209.4 77.9 L218.4 80.3" stroke="#8fd0e4" stroke-width="0.6"/><path d="M207.4 82.8 L215.4 87.4" stroke="#8fd0e4" stroke-width="0.6"/><path d="M204.2 87.0 L210.7 93.5" stroke="#8fd0e4" stroke-width="0.6"/><path d="M200.0 90.2 L204.6 98.2" stroke="#8fd0e4" stroke-width="0.6"/><path d="M195.1 92.2 L197.5 101.2" stroke="#8fd0e4" stroke-width="0.6"/><path d="M189.8 92.9 L189.8 102.2" stroke="#8fd0e4" stroke-width="0.6"/><path d="M184.5 92.2 L182.1 101.2" stroke="#8fd0e4" stroke-width="0.6"/><path d="M179.7 90.2 L175.0 98.2" stroke="#8fd0e4" stroke-width="0.6"/><path d="M175.4 87.0 L168.9 93.5" stroke="#8fd0e4" stroke-width="0.6"/><path d="M172.2 82.8 L164.2 87.4" stroke="#8fd0e4" stroke-width="0.6"/><path d="M170.2 77.9 L161.2 80.3" stroke="#8fd0e4" stroke-width="0.6"/><path d="M169.5 72.6 L160.2 72.6" stroke="#8fd0e4" stroke-width="0.6"/><path d="M170.2 67.3 L161.2 64.9" stroke="#8fd0e4" stroke-width="0.6"/><path d="M172.2 62.4 L164.2 57.8" stroke="#8fd0e4" stroke-width="0.6"/><path d="M175.4 58.2 L168.9 51.7" stroke="#8fd0e4" stroke-width="0.6"/><path d="M179.7 55.0 L175.0 47.0" stroke="#8fd0e4" stroke-width="0.6"/><path d="M184.5 53.0 L182.1 44.0" stroke="#8fd0e4" stroke-width="0.6"/><text x="190" y="75.5" font-family="Liberation Serif" font-size="6.5" font-weight="700" fill="#222" text-anchor="middle" textLength="11" lengthAdjust="spacingAndGlyphs">85%</text></svg><div style="position:absolute;left:0;top:133px;width:223px;height:1.5px;background:#dcdfe4"></div></div><div style="position:absolute;left:801px;top:851px;width:220px;height:188px;border:1.5px solid #d3d6dc;border-radius:7px;overflow:hidden;background:#fff"><svg style="position:absolute;left:-1.5px;top:-1.5px;filter:blur(0.35px)" width="223" height="135" viewBox="0 0 223 135"><rect x="2.4" y="0.3" width="86" height="5" fill="#fff" stroke="#c6c6c6" stroke-width="0.9"/><rect x="2.4" y="12.9" width="86" height="7.1" fill="#fff" stroke="#c6c6c6" stroke-width="0.9"/><rect x="2.4" y="27.7" width="17" height="7.1" fill="#fff" stroke="#c6c6c6" stroke-width="0.9"/><rect x="22.7" y="28.2" width="24" height="6.6" fill="#fff" stroke="#c6c6c6" stroke-width="0.9"/><rect x="51.7" y="27.7" width="36.7" height="7.1" fill="#fff" stroke="#c6c6c6" stroke-width="0.9"/><rect x="2.4" y="42" width="41.6" height="8.2" fill="#fff" stroke="#c6c6c6" stroke-width="0.9"/><rect x="51.7" y="42" width="36.7" height="8.2" fill="#fff" stroke="#c6c6c6" stroke-width="0.9"/><rect x="51.7" y="56.7" width="34.5" height="7.7" fill="#fff" stroke="#c6c6c6" stroke-width="0.9"/><text x="6" y="17.8" font-family="Liberation Sans" font-size="3.6" font-weight="400" fill="#8a8a8a" text-anchor="start" textLength="11" lengthAdjust="spacingAndGlyphs">Default</text><text x="5" y="32.8" font-family="Liberation Sans" font-size="3.6" font-weight="400" fill="#8a8a8a" text-anchor="start" textLength="4" lengthAdjust="spacingAndGlyphs">18</text><text x="25" y="33" font-family="Liberation Sans" font-size="3.6" font-weight="400" fill="#8a8a8a" text-anchor="start" textLength="19" lengthAdjust="spacingAndGlyphs">Select Series</text><text x="55" y="32.8" font-family="Liberation Sans" font-size="3.6" font-weight="400" fill="#8a8a8a" text-anchor="start" textLength="20" lengthAdjust="spacingAndGlyphs">Left-to-right</text><text x="5" y="47.5" font-family="Liberation Sans" font-size="3.6" font-weight="400" fill="#8a8a8a" text-anchor="start" textLength="4" lengthAdjust="spacingAndGlyphs">18</text><text x="55" y="47.5" font-family="Liberation Sans" font-size="3.6" font-weight="400" fill="#8a8a8a" text-anchor="start" textLength="5" lengthAdjust="spacingAndGlyphs">1.0</text><text x="55" y="62" font-family="Liberation Sans" font-size="3.6" font-weight="400" fill="#8a8a8a" text-anchor="start" textLength="4" lengthAdjust="spacingAndGlyphs">10</text><text x="1" y="62.5" font-family="Liberation Sans" font-size="3.6" font-weight="400" fill="#8a8a8a" text-anchor="start" textLength="13" lengthAdjust="spacingAndGlyphs">Markers</text><text x="20" y="62.3" font-family="Liberation Sans" font-size="3.6" font-weight="400" fill="#8a8a8a" text-anchor="start" textLength="22" lengthAdjust="spacingAndGlyphs">In increments of</text><text x="92" y="33" font-family="Liberation Sans" font-size="3.6" font-weight="400" fill="#8a8a8a" text-anchor="start" textLength="22" lengthAdjust="spacingAndGlyphs">Color Palette</text><text x="92" y="47.5" font-family="Liberation Sans" font-size="3.6" font-weight="400" fill="#8a8a8a" text-anchor="start" textLength="20" lengthAdjust="spacingAndGlyphs">Circle Shape</text><text x="92" y="62" font-family="Liberation Sans" font-size="3.6" font-weight="400" fill="#8a8a8a" text-anchor="start" textLength="12" lengthAdjust="spacingAndGlyphs">Position</text><rect x="1.3" y="67.6" width="110" height="1.4" fill="#c8c8c8"/><text x="4" y="74.4" font-family="Liberation Sans" font-size="5" font-weight="700" fill="#222" text-anchor="start">Text</text><text x="48.4" y="74.4" font-family="Liberation Sans" font-size="5" font-weight="700" fill="#222" text-anchor="start">Value/Size</text><text x="78" y="74.4" font-family="Liberation Sans" font-size="5" font-weight="700" fill="#222" text-anchor="start">Color Code</text><text x="4" y="81.4" font-family="Liberation Sans" font-size="5" font-weight="700" fill="#222" text-anchor="start">Poor</text><text x="48.4" y="81.4" font-family="Liberation Sans" font-size="5" font-weight="700" fill="#222" text-anchor="start">20</text><text x="78" y="81.4" font-family="Liberation Sans" font-size="5" font-weight="700" fill="#222" text-anchor="start">255</text><text x="4" y="88.4" font-family="Liberation Sans" font-size="5" font-weight="700" fill="#222" text-anchor="start">Fair</text><text x="48.4" y="88.4" font-family="Liberation Sans" font-size="5" font-weight="700" fill="#222" text-anchor="start">50</text><text x="78" y="88.4" font-family="Liberation Sans" font-size="5" font-weight="700" fill="#222" text-anchor="start">3381759</text><text x="4" y="95.4" font-family="Liberation Sans" font-size="5" font-weight="700" fill="#222" text-anchor="start">Good</text><text x="48.4" y="95.4" font-family="Liberation Sans" font-size="5" font-weight="700" fill="#222" text-anchor="start">20</text><text x="78" y="95.4" font-family="Liberation Sans" font-size="5" font-weight="700" fill="#222" text-anchor="start">5384961</text><text x="4" y="102.4" font-family="Liberation Sans" font-size="5" font-weight="700" fill="#222" text-anchor="start">Great</text><text x="48.4" y="102.4" font-family="Liberation Sans" font-size="5" font-weight="700" fill="#222" text-anchor="start">10</text><text x="78" y="102.4" font-family="Liberation Sans" font-size="5" font-weight="700" fill="#222" text-anchor="start">7658211</text><rect x="1.3" y="114.3" width="98" height="1.4" fill="#bdbdbd"/><rect x="24" y="122" width="19" height="9" fill="#fff" stroke="#c9c9c9" stroke-width="0.8"/><rect x="46" y="122" width="19" height="9" fill="#fff" stroke="#c9c9c9" stroke-width="0.8"/><text x="1" y="127.5" font-family="Liberation Sans" font-size="3.5" font-weight="400" fill="#999" text-anchor="start" textLength="18" lengthAdjust="spacingAndGlyphs">Initial State</text><text x="31" y="128.5" font-family="Liberation Sans" font-size="3.5" font-weight="400" fill="#999" text-anchor="start">Up</text><text x="52" y="128.5" font-family="Liberation Sans" font-size="3.5" font-weight="400" fill="#999" text-anchor="start">Down</text><rect x="117" y="0" width="1.2" height="118" fill="#d0d0d0"/><rect x="117" y="117" width="106" height="1.2" fill="#d0d0d0"/><text x="118" y="127.5" font-family="Liberation Sans" font-size="3.5" font-weight="400" fill="#999" text-anchor="start" textLength="23" lengthAdjust="spacingAndGlyphs">Gauge Rotation</text><text x="165" y="127.5" font-family="Liberation Sans" font-size="3.5" font-weight="400" fill="#999" text-anchor="start" textLength="22" lengthAdjust="spacingAndGlyphs">Label Position</text><path d="M141.60 61.70 A41.7 41.7 0 0 1 143.64 48.81 L153.06 51.87 A31.8 31.8 0 0 0 151.50 61.70 Z" fill="#c0c0c0"/><path d="M143.64 48.81 A41.7 41.7 0 0 1 149.56 37.19 L157.57 43.01 A31.8 31.8 0 0 0 153.06 51.87 Z" fill="#8f8f8f"/><path d="M149.56 37.19 A41.7 41.7 0 0 1 158.79 27.96 L164.61 35.97 A31.8 31.8 0 0 0 157.57 43.01 Z" fill="#c0c0c0"/><path d="M158.79 27.96 A41.7 41.7 0 0 1 170.41 22.04 L173.47 31.46 A31.8 31.8 0 0 0 164.61 35.97 Z" fill="#8f8f8f"/><path d="M170.41 22.04 A41.7 41.7 0 0 1 183.30 20.00 L183.30 29.90 A31.8 31.8 0 0 0 173.47 31.46 Z" fill="#c0c0c0"/><path d="M183.30 20.00 A41.7 41.7 0 0 1 196.19 22.04 L193.13 31.46 A31.8 31.8 0 0 0 183.30 29.90 Z" fill="#8f8f8f"/><path d="M196.19 22.04 A41.7 41.7 0 0 1 207.81 27.96 L201.99 35.97 A31.8 31.8 0 0 0 193.13 31.46 Z" fill="#c0c0c0"/><path d="M207.81 27.96 A41.7 41.7 0 0 1 217.04 37.19 L209.03 43.01 A31.8 31.8 0 0 0 201.99 35.97 Z" fill="#8f8f8f"/><path d="M217.04 37.19 A41.7 41.7 0 0 1 222.96 48.81 L213.54 51.87 A31.8 31.8 0 0 0 209.03 43.01 Z" fill="#c0c0c0"/><path d="M222.96 48.81 A41.7 41.7 0 0 1 225.00 61.70 L215.10 61.70 A31.8 31.8 0 0 0 213.54 51.87 Z" fill="#8f8f8f"/><path d="M151.50 61.70 A31.8 31.8 0 0 1 156.33 44.85 L165.66 50.68 A20.8 20.8 0 0 0 162.50 61.70 Z" fill="#f20d0d"/><path d="M156.33 44.85 A31.8 31.8 0 0 1 202.88 36.64 L196.11 45.31 A20.8 20.8 0 0 0 165.66 50.68 Z" fill="#f59a33"/><path d="M202.88 36.64 A31.8 31.8 0 0 1 213.18 50.82 L202.85 54.59 A20.8 20.8 0 0 0 196.11 45.31 Z" fill="#ecd94a"/><path d="M213.18 50.82 A31.8 31.8 0 0 1 215.10 61.70 L204.10 61.70 A20.8 20.8 0 0 0 202.85 54.59 Z" fill="#92cf5c"/><text x="157.9" y="56.2" font-family="Liberation Sans" font-size="3.8" font-weight="700" fill="#3a3a3a" text-anchor="middle">Poor</text><text x="178.7" y="37.1" font-family="Liberation Sans" font-size="3.8" font-weight="700" fill="#3a3a3a" text-anchor="middle">Fair</text><text x="204.6" y="47.6" font-family="Liberation Sans" font-size="3.8" font-weight="700" fill="#3a3a3a" text-anchor="middle">Good</text><text x="209.2" y="58.5" font-family="Liberation Sans" font-size="3.8" font-weight="700" fill="#3a3a3a" text-anchor="middle">Great</text><path d="M183.3 61.7 L150.2 34.9" stroke="#333" stroke-width="0.99"/><text x="185.3" y="74.5" font-family="Liberation Sans" font-size="6.8" font-weight="700" fill="#222" text-anchor="middle">20</text><text x="136.2" y="63.0" font-family="Liberation Sans" font-size="3.6" font-weight="400" fill="#777" text-anchor="middle">0%</text><text x="138.5" y="48.5" font-family="Liberation Sans" font-size="3.6" font-weight="400" fill="#777" text-anchor="middle">10%</text><text x="145.2" y="35.4" font-family="Liberation Sans" font-size="3.6" font-weight="400" fill="#777" text-anchor="middle">20%</text><text x="155.6" y="24.9" font-family="Liberation Sans" font-size="3.6" font-weight="400" fill="#777" text-anchor="middle">30%</text><text x="168.7" y="18.3" font-family="Liberation Sans" font-size="3.6" font-weight="400" fill="#777" text-anchor="middle">40%</text><text x="183.3" y="16.0" font-family="Liberation Sans" font-size="3.6" font-weight="400" fill="#777" text-anchor="middle">50%</text><text x="197.9" y="18.3" font-family="Liberation Sans" font-size="3.6" font-weight="400" fill="#777" text-anchor="middle">60%</text><text x="211.0" y="24.9" font-family="Liberation Sans" font-size="3.6" font-weight="400" fill="#777" text-anchor="middle">70%</text><text x="221.4" y="35.4" font-family="Liberation Sans" font-size="3.6" font-weight="400" fill="#777" text-anchor="middle">80%</text><text x="228.1" y="48.5" font-family="Liberation Sans" font-size="3.6" font-weight="400" fill="#777" text-anchor="middle">90%</text><text x="230.4" y="63.1" font-family="Liberation Sans" font-size="3.6" font-weight="400" fill="#777" text-anchor="middle">100%</text><text x="159" y="112" font-family="Liberation Sans" font-size="4" font-weight="700" fill="#333" text-anchor="start" textLength="53" lengthAdjust="spacingAndGlyphs">Change this note in Cell D25</text></svg><div style="position:absolute;left:0;top:133px;width:223px;height:1.5px;background:#dcdfe4"></div></div><div style="position:absolute;left:1051px;top:851px;width:220px;height:188px;border:1.5px solid #d3d6dc;border-radius:7px;overflow:hidden;background:#fff"><div style="position:absolute;left:0;top:133px;width:223px;height:1.5px;background:#dcdfe4"></div></div><svg style="position:absolute;left:1126.8px;top:880.4px" width="72" height="76" viewBox="0 0 72 76">
<path d="M10.3 1 H42 L64.5 23.5 V66 C64.5 71 61 74.5 56 74.5 H13.5 C8.5 74.5 6.3 71 6.3 66 V9 C6.3 4 9 1 13.5 1 Z M13.3 7.6 V68 H57.5 V26 H39.7 V7.6 Z" fill="#878d9e" fill-rule="evenodd"/>
<rect x="1.3" y="37" width="70" height="23" rx="2.8" fill="#0e7438"/>
<text x="36.2" y="55.8" font-family="Liberation Sans" font-weight="700" font-size="21" fill="#fff" text-anchor="middle" letter-spacing="0.5">CSV</text>
</svg><div style="position:absolute;left:1301px;top:851px;width:220px;height:188px;border:1.5px solid #d3d6dc;border-radius:7px;overflow:hidden;background:#fff"><div style="position:absolute;left:0;top:133px;width:223px;height:1.5px;background:#dcdfe4"></div></div><svg style="position:absolute;left:1376.4px;top:880.4px" width="72" height="76" viewBox="0 0 72 76">
<path d="M10.3 1 H42 L64.5 23.5 V66 C64.5 71 61 74.5 56 74.5 H13.5 C8.5 74.5 6.3 71 6.3 66 V9 C6.3 4 9 1 13.5 1 Z M13.3 7.6 V68 H57.5 V26 H39.7 V7.6 Z" fill="#878d9e" fill-rule="evenodd"/>
<rect x="1.3" y="37" width="70" height="23" rx="2.8" fill="#0e7438"/>
<text x="36.2" y="55.8" font-family="Liberation Sans" font-weight="700" font-size="21" fill="#fff" text-anchor="middle" letter-spacing="0.5">CSV</text>
</svg><div style="position:absolute;left:52px;top:1068.5px;width:220px;height:188px;border:1.5px solid #d3d6dc;border-radius:7px;overflow:hidden;background:#fff"><div style="position:absolute;left:0;top:133px;width:223px;height:1.5px;background:#dcdfe4"></div></div><svg style="position:absolute;left:126.5px;top:1102px" width="72" height="64" viewBox="0 0 72 64">
<defs><clipPath id="xc126"><rect x="17.4" y="0" width="52.8" height="63.5" rx="3.5"/></clipPath></defs>
<g clip-path="url(#xc126)">
<rect x="17" y="0" width="26.5" height="16.6" fill="#18925a"/><rect x="43.3" y="0" width="27" height="16.6" fill="#2cc47f"/>
<rect x="17" y="16.5" width="26.5" height="15.2" fill="#0f8548"/><rect x="43.3" y="16.5" width="27" height="15.2" fill="#1cad67"/>
<rect x="17" y="31.7" width="26.5" height="16.2" fill="#1b4f2f"/><rect x="43.3" y="31.7" width="27" height="16.2" fill="#189752"/>
<rect x="17" y="47.8" width="26.5" height="16" fill="#17492b"/><rect x="43.3" y="47.8" width="27" height="16" fill="#266942"/>
</g>
<rect x="0" y="14.6" width="34.5" height="35.1" rx="3.2" fill="#0e7438"/>
<path d="M9.7 23.1 H14.3 L17.3 28.6 L20.3 23.1 H24.9 L19.7 32.1 L25 40.9 H20.4 L17.3 35.4 L14.2 40.9 H9.6 L14.9 32.1 Z" fill="#fff"/>
</svg><div style="position:absolute;left:302px;top:1068.5px;width:220px;height:188px;border:1.5px solid #d3d6dc;border-radius:7px;overflow:hidden;background:#fff"><div style="position:absolute;left:0;top:133px;width:223px;height:1.5px;background:#dcdfe4"></div></div><svg style="position:absolute;left:376px;top:1102px" width="72" height="64" viewBox="0 0 72 64">
<defs><clipPath id="xc376"><rect x="17.4" y="0" width="52.8" height="63.5" rx="3.5"/></clipPath></defs>
<g clip-path="url(#xc376)">
<rect x="17" y="0" width="26.5" height="16.6" fill="#18925a"/><rect x="43.3" y="0" width="27" height="16.6" fill="#2cc47f"/>
<rect x="17" y="16.5" width="26.5" height="15.2" fill="#0f8548"/><rect x="43.3" y="16.5" width="27" height="15.2" fill="#1cad67"/>
<rect x="17" y="31.7" width="26.5" height="16.2" fill="#1b4f2f"/><rect x="43.3" y="31.7" width="27" height="16.2" fill="#189752"/>
<rect x="17" y="47.8" width="26.5" height="16" fill="#17492b"/><rect x="43.3" y="47.8" width="27" height="16" fill="#266942"/>
</g>
<rect x="0" y="14.6" width="34.5" height="35.1" rx="3.2" fill="#0e7438"/>
<path d="M9.7 23.1 H14.3 L17.3 28.6 L20.3 23.1 H24.9 L19.7 32.1 L25 40.9 H20.4 L17.3 35.4 L14.2 40.9 H9.6 L14.9 32.1 Z" fill="#fff"/>
</svg><div style="position:absolute;left:551px;top:1068.5px;width:220px;height:188px;border:1.5px solid #d3d6dc;border-radius:7px;overflow:hidden;background:#fff"><svg style="position:absolute;left:-1.5px;top:-1.5px;filter:blur(0.35px)" width="223" height="135" viewBox="0 0 223 135"><rect x="92.3" y="0" width="1" height="135" fill="#9a9a9a"/><rect x="92.3" y="0.4" width="127" height="0.9" fill="#7fb0da"/><rect x="93" y="8.4" width="95.7" height="7" fill="#1f74b5"/><text x="89" y="14.1" font-family="Liberation Sans" font-size="6.3" fill="#333" text-anchor="end" textLength="77" lengthAdjust="spacingAndGlyphs">cat_cols__Postal Code_60098</text><rect x="93" y="22.6" width="84.8" height="7" fill="#1f74b5"/><text x="89" y="28.3" font-family="Liberation Sans" font-size="6.3" fill="#333" text-anchor="end" textLength="77" lengthAdjust="spacingAndGlyphs">cat_cols__Postal Code_90503</text><rect x="93" y="37.0" width="65.6" height="7" fill="#1f74b5"/><text x="89" y="42.7" font-family="Liberation Sans" font-size="6.3" fill="#333" text-anchor="end" textLength="77" lengthAdjust="spacingAndGlyphs">cat_cols__Postal Code_48187</text><rect x="93" y="51.7" width="65.0" height="7" fill="#1f74b5"/><text x="89" y="57.4" font-family="Liberation Sans" font-size="6.3" fill="#333" text-anchor="end" textLength="77" lengthAdjust="spacingAndGlyphs">cat_cols__Postal Code_34761</text><rect x="93" y="65.9" width="62.3" height="7" fill="#1f74b5"/><text x="89" y="71.6" font-family="Liberation Sans" font-size="6.3" fill="#333" text-anchor="end" textLength="84" lengthAdjust="spacingAndGlyphs">cat_cols__Sub-Category_Copiers</text><rect x="93" y="80.5" width="59.0" height="7" fill="#1f74b5"/><text x="89" y="86.2" font-family="Liberation Sans" font-size="6.3" fill="#333" text-anchor="end" textLength="81" lengthAdjust="spacingAndGlyphs">cat_cols__Sub-Category_Tables</text><rect x="93" y="94.8" width="55.0" height="7" fill="#1f74b5"/><text x="89" y="100.5" font-family="Liberation Sans" font-size="6.3" fill="#333" text-anchor="end" textLength="77" lengthAdjust="spacingAndGlyphs">cat_cols__Postal Code_65807</text><rect x="93" y="109.2" width="54.0" height="7" fill="#1f74b5"/><text x="89" y="114.9" font-family="Liberation Sans" font-size="6.3" fill="#333" text-anchor="end" textLength="77" lengthAdjust="spacingAndGlyphs">cat_cols__Postal Code_59405</text><rect x="93" y="123.5" width="53.5" height="7" fill="#1f74b5"/><text x="89" y="129.2" font-family="Liberation Sans" font-size="6.3" fill="#333" text-anchor="end" textLength="77" lengthAdjust="spacingAndGlyphs">cat_cols__Postal Code_80501</text></svg><div style="position:absolute;left:0;top:133px;width:223px;height:1.5px;background:#dcdfe4"></div></div><div style="position:absolute;left:801px;top:1068.5px;width:220px;height:188px;border:1.5px solid #d3d6dc;border-radius:7px;overflow:hidden;background:#fff"><div style="position:absolute;left:0;top:133px;width:223px;height:1.5px;background:#dcdfe4"></div></div><svg style="position:absolute;left:882.5px;top:1097px" width="62" height="76" viewBox="0 0 62 76">
<path d="M8.5 4 H34.5 L56.5 26 V66 C56.5 69.5 54 72 50.5 72 H8.5 C5 72 3.5 69.5 3.5 66 V10 C3.5 6.5 5 4 8.5 4 Z" fill="none" stroke="#212b4d" stroke-width="7" stroke-linejoin="round"/>
<path d="M33 3 V27.5 H57.5 Z" fill="#212b4d"/></svg><svg style="position:absolute;left:68.7px;top:1003px" width="18" height="20" viewBox="0 0 18 20">
<rect x="0" y="0.2" width="17.8" height="19.8" rx="2" fill="#2f7fe8"/>
<path d="M2.2 17.6 L6.1 10.2 L9.8 14.5 L11.8 12.6 L15.6 17.6 Z" fill="#fff"/></svg><svg style="position:absolute;left:318.2px;top:1003px" width="18" height="20" viewBox="0 0 18 20">
<rect x="0" y="0.2" width="17.8" height="19.8" rx="2" fill="#2f7fe8"/>
<path d="M2.2 17.6 L6.1 10.2 L9.8 14.5 L11.8 12.6 L15.6 17.6 Z" fill="#fff"/></svg><svg style="position:absolute;left:567.8px;top:1003px" width="18" height="20" viewBox="0 0 18 20">
<rect x="0" y="0.2" width="17.8" height="19.8" rx="2" fill="#2f7fe8"/>
<path d="M2.2 17.6 L6.1 10.2 L9.8 14.5 L11.8 12.6 L15.6 17.6 Z" fill="#fff"/></svg><svg style="position:absolute;left:817.6px;top:1003px" width="18" height="20" viewBox="0 0 18 20">
<rect x="0" y="0.2" width="17.8" height="19.8" rx="2" fill="#2f7fe8"/>
<path d="M2.2 17.6 L6.1 10.2 L9.8 14.5 L11.8 12.6 L15.6 17.6 Z" fill="#fff"/></svg><svg style="position:absolute;left:1065px;top:1002px" width="22" height="22" viewBox="0 0 22 22">
<path d="M3.9 1.2 H12.2 L18.2 7.2 V19.5 C18.2 20.5 17.5 21.5 16.3 21.5 H5.4 C4.2 21.5 2 20.5 2 19.5 V3 C2 2 3 1.2 3.9 1.2 Z M3.9 2.9 V19.7 H16.3 V8 H11.2 V2.9 Z" fill="#878d9e" fill-rule="evenodd"/>
<rect x="0.2" y="10.5" width="21" height="7" rx="1" fill="#0e7438"/>
<text x="10.7" y="16.4" font-family="Liberation Sans" font-weight="700" font-size="6.2" fill="#fff" text-anchor="middle">CSV</text></svg><svg style="position:absolute;left:1314.5px;top:1002px" width="22" height="22" viewBox="0 0 22 22">
<path d="M3.9 1.2 H12.2 L18.2 7.2 V19.5 C18.2 20.5 17.5 21.5 16.3 21.5 H5.4 C4.2 21.5 2 20.5 2 19.5 V3 C2 2 3 1.2 3.9 1.2 Z M3.9 2.9 V19.7 H16.3 V8 H11.2 V2.9 Z" fill="#878d9e" fill-rule="evenodd"/>
<rect x="0.2" y="10.5" width="21" height="7" rx="1" fill="#0e7438"/>
<text x="10.7" y="16.4" font-family="Liberation Sans" font-weight="700" font-size="6.2" fill="#fff" text-anchor="middle">CSV</text></svg><svg style="position:absolute;left:66px;top:1220.5px" width="22" height="20" viewBox="0 0 22 20">
<rect x="5.8" y="0" width="7.2" height="4.4" fill="#18925a"/><rect x="13" y="0" width="8.2" height="4.4" fill="#2cc47f"/>
<rect x="5.8" y="4.4" width="7.2" height="5" fill="#0f8548"/><rect x="13" y="4.4" width="8.2" height="5" fill="#1cad67"/>
<rect x="5.8" y="9.4" width="7.2" height="4.8" fill="#1b4f2f"/><rect x="13" y="9.4" width="8.2" height="4.8" fill="#189752"/>
<rect x="5.8" y="14.2" width="7.2" height="4.8" fill="#17492b"/><rect x="13" y="14.2" width="8.2" height="4.8" fill="#266942"/>
<rect x="0.3" y="4.2" width="10.7" height="10.7" rx="1" fill="#0e7438"/>
<path d="M3.2 6.8 H4.6 L5.6 8.6 L6.6 6.8 H8 L6.3 9.6 L8 12.4 H6.6 L5.6 10.6 L4.6 12.4 H3.2 L4.9 9.6 Z" fill="#fff"/></svg><svg style="position:absolute;left:315.5px;top:1220.5px" width="22" height="20" viewBox="0 0 22 20">
<rect x="5.8" y="0" width="7.2" height="4.4" fill="#18925a"/><rect x="13" y="0" width="8.2" height="4.4" fill="#2cc47f"/>
<rect x="5.8" y="4.4" width="7.2" height="5" fill="#0f8548"/><rect x="13" y="4.4" width="8.2" height="5" fill="#1cad67"/>
<rect x="5.8" y="9.4" width="7.2" height="4.8" fill="#1b4f2f"/><rect x="13" y="9.4" width="8.2" height="4.8" fill="#189752"/>
<rect x="5.8" y="14.2" width="7.2" height="4.8" fill="#17492b"/><rect x="13" y="14.2" width="8.2" height="4.8" fill="#266942"/>
<rect x="0.3" y="4.2" width="10.7" height="10.7" rx="1" fill="#0e7438"/>
<path d="M3.2 6.8 H4.6 L5.6 8.6 L6.6 6.8 H8 L6.3 9.6 L8 12.4 H6.6 L5.6 10.6 L4.6 12.4 H3.2 L4.9 9.6 Z" fill="#fff"/></svg><svg style="position:absolute;left:567.8px;top:1220.5px" width="18" height="20" viewBox="0 0 18 20">
<rect x="0" y="0.2" width="17.8" height="19.8" rx="2" fill="#2f7fe8"/>
<path d="M2.2 17.6 L6.1 10.2 L9.8 14.5 L11.8 12.6 L15.6 17.6 Z" fill="#fff"/></svg><svg style="position:absolute;left:816.5px;top:1219px" width="20" height="24" viewBox="0 0 20 24">
<path d="M3.3 1.8 H10.5 L16.6 8 V20.2 C16.6 21.2 15.8 22 14.8 22 H3.3 C2.3 22 1.6 21.2 1.6 20.2 V3.6 C1.6 2.6 2.3 1.8 3.3 1.8 Z" fill="none" stroke="#212b4d" stroke-width="1.9" stroke-linejoin="round"/>
<path d="M10.2 1.8 V8.5 H16.6 Z" fill="#212b4d"/></svg><svg style="position:absolute;left:1779px;top:407px" width="28" height="24" viewBox="0 0 28 24">
<circle cx="6.7" cy="18.8" r="2.6" fill="none" stroke="#212b4d" stroke-width="1.7"/>
<circle cx="16.3" cy="14.5" r="2.6" fill="none" stroke="#212b4d" stroke-width="1.7"/>
<circle cx="21.7" cy="5.9" r="2.6" fill="none" stroke="#212b4d" stroke-width="1.7"/>
<path d="M9.1 17.7 L13.9 15.6 M17.7 12.3 L20.3 8.1" stroke="#212b4d" stroke-width="1.7"/></svg><svg style="position:absolute;left:2191px;top:477.5px" width="34" height="34" viewBox="0 0 34 34">
<path d="M4.5 29.5 L6.3 22 L23.5 4.8 C24.7 3.6 26.6 3.6 27.8 4.8 L29.2 6.2 C30.4 7.4 30.4 9.3 29.2 10.5 L12 27.7 Z M21 7.3 L26.7 13 M6.3 22 L12 27.7" fill="none" stroke="#4b5563" stroke-width="1.9" stroke-linejoin="round"/>
<path d="M4.5 29.5 L6 23.7 L10.3 28 Z" fill="#4b5563"/></svg><svg style="position:absolute;left:2191px;top:602.5px" width="34" height="34" viewBox="0 0 34 34">
<path d="M4.5 29.5 L6.3 22 L23.5 4.8 C24.7 3.6 26.6 3.6 27.8 4.8 L29.2 6.2 C30.4 7.4 30.4 9.3 29.2 10.5 L12 27.7 Z M21 7.3 L26.7 13 M6.3 22 L12 27.7" fill="none" stroke="#4b5563" stroke-width="1.9" stroke-linejoin="round"/>
<path d="M4.5 29.5 L6 23.7 L10.3 28 Z" fill="#4b5563"/></svg><svg style="position:absolute;left:1858px;top:757px" width="30" height="30" viewBox="0 0 30 30">
<path d="M6.8 17.3 H5.5 C4.3 17.3 3.5 16.5 3.5 15.3 V4.8 C3.5 3.6 4.3 2.8 5.5 2.8 H16.3 C17.5 2.8 18.3 3.6 18.3 4.8 V6" fill="none" stroke="#8a90a0" stroke-width="1.7" stroke-linecap="round"/>
<rect x="12" y="11.3" width="15" height="15" rx="2.5" fill="none" stroke="#8a90a0" stroke-width="1.7"/></svg><div style="position:absolute;left:1781px;top:826px;width:319px;height:57px;background:#1a6ae0;border-radius:7px"></div><svg style="position:absolute;left:1808px;top:840px" width="40" height="32" viewBox="0 0 40 32">
<path d="M19.8 3.5 V21 M12.5 14 L19.8 21.3 L27 14" fill="none" stroke="#fff" stroke-width="2.4" stroke-linecap="round" stroke-linejoin="round"/>
<path d="M5 19.5 V25 C5 26.5 6 27.5 7.5 27.5 H32 C33.5 27.5 34.5 26.5 34.5 25 V19.5" fill="none" stroke="#fff" stroke-width="2.4" stroke-linecap="round"/></svg><svg style="position:absolute;left:2191px;top:926px" width="34" height="34" viewBox="0 0 34 34">
<path d="M4.5 29.5 L6.3 22 L23.5 4.8 C24.7 3.6 26.6 3.6 27.8 4.8 L29.2 6.2 C30.4 7.4 30.4 9.3 29.2 10.5 L12 27.7 Z M21 7.3 L26.7 13 M6.3 22 L12 27.7" fill="none" stroke="#4b5563" stroke-width="1.9" stroke-linejoin="round"/>
<path d="M4.5 29.5 L6 23.7 L10.3 28 Z" fill="#4b5563"/></svg><div style="position:absolute;left:1782.6px;top:1093.7px;width:51.3px;height:51.3px;border-radius:50%;background:#925fa6"></div><div style="position:absolute;left:413px;top:178px;width:110.5px;height:53.1px;border-style:solid;border-color:#f9b900;border-width:7.5px 8px;box-shadow:1px 4px 3px rgba(0,0,0,0.5), inset 1px 4px 4px rgba(0,0,0,0.6)"></div><div style="position:absolute;left:22.6px;top:745px;width:398.3px;height:62.4px;border-style:solid;border-color:#f9b900;border-width:7.5px 8px;box-shadow:1px 4px 3px rgba(0,0,0,0.5), inset 1px 4px 4px rgba(0,0,0,0.6)"></div><div style="position:absolute;left:1476.1px;top:738.1px;width:199.9px;height:77.6px;border-style:solid;border-color:#f9b900;border-width:7.5px 8px;box-shadow:1px 4px 3px rgba(0,0,0,0.5), inset 1px 4px 4px rgba(0,0,0,0.6)"></div><svg style="position:absolute;left:590px;top:805px" width="34" height="40" viewBox="0 0 34 40">
<defs><filter id="cs" x="-50%" y="-50%" width="200%" height="200%"><feDropShadow dx="1" dy="2" stdDeviation="1.3" flood-color="#000" flood-opacity="0.45"/></filter></defs>
<path d="M8.9 8.1 L8.9 25.9 L13 22.2 L16.2 29.8 L19.5 28.5 L16.5 21.6 L22.4 21.6 Z" fill="#000" stroke="#fff" stroke-width="3.4" paint-order="stroke" stroke-linejoin="round" filter="url(#cs)"/></svg>
<div class="t" style="left:134.0px;top:24px;font-size:23.5px;line-height:26px;font-weight:700;color:#ffffff;letter-spacing:-0.574px;">Home</div><div class="t" style="left:237.0px;top:24px;font-size:23.5px;line-height:26px;font-weight:700;color:#ffffff;letter-spacing:-0.518px;">Workspaces</div><div class="t" style="left:410.0px;top:24px;font-size:23.5px;line-height:26px;font-weight:700;color:#ffffff;letter-spacing:-0.216px;">Create</div><div class="t" style="left:1271.7px;top:22px;font-size:22.8px;line-height:26px;font-weight:400;color:#7d8399;letter-spacing:-0.173px;">Search projects, datasets, models, or asset IDs</div><div class="t" style="left:1891.0px;top:22px;font-size:22.9px;line-height:26px;font-weight:700;color:#ffffff;letter-spacing:-0.131px;">Invite</div><div class="t" style="left:2227.7px;top:22px;font-size:24.4px;line-height:27px;font-weight:700;color:#ffffff;letter-spacing:0.000px;">Y</div><div class="t" style="left:79.9px;top:109px;font-size:21.4px;line-height:24px;font-weight:400;color:#4b5268;letter-spacing:0.995px;">.yesha</div><div class="t" style="left:96.9px;top:142px;font-size:28.7px;line-height:32px;font-weight:700;color:#212b4d;letter-spacing:0.338px;">Tutorial Project: Forecast in-store unit sales</div><div class="t" style="left:51.0px;top:196px;font-size:23.5px;line-height:26px;font-weight:400;color:#4b5268;letter-spacing:0.005px;">Overview</div><div class="t" style="left:189.0px;top:196px;font-size:23.5px;line-height:26px;font-weight:400;color:#4b5268;letter-spacing:-0.227px;">Phases</div><div class="t" style="left:304.0px;top:196px;font-size:23.5px;line-height:26px;font-weight:400;color:#4b5268;letter-spacing:0.287px;">Datasets</div><div class="t" style="left:436.5px;top:196px;font-size:23.5px;line-height:26px;font-weight:400;color:#1a6ae0;letter-spacing:0.499px;">Models</div><div class="t" style="left:552.4px;top:196px;font-size:23.5px;line-height:26px;font-weight:400;color:#4b5268;letter-spacing:0.144px;">Reports</div><div class="t" style="left:672.9px;top:196px;font-size:23.5px;line-height:26px;font-weight:400;color:#4b5268;letter-spacing:0.086px;">Issues</div><div class="t" style="left:779.6px;top:196px;font-size:23.5px;line-height:26px;font-weight:400;color:#4b5268;letter-spacing:0.357px;">Project activity</div><div class="t" style="left:975.8px;top:196px;font-size:23.5px;line-height:26px;font-weight:400;color:#4b5268;letter-spacing:0.377px;">Settings</div><div class="t" style="left:52.0px;top:280px;font-size:39.5px;line-height:44px;font-weight:400;color:#212b4d;letter-spacing:0.456px;">scikit-learn Ridge Regression model</div><div class="t" style="left:729.3px;top:280px;font-size:39.5px;line-height:44px;font-weight:700;color:#212b4d;letter-spacing:-1.335px;">Version 1</div><div class="t" style="left:80.0px;top:370px;font-size:23.5px;line-height:26px;font-weight:400;color:#6847e2;letter-spacing:0.418px;">Experimentation</div><div class="t" style="left:352.4px;top:370px;font-size:23.5px;line-height:26px;font-weight:400;color:#7c973a;letter-spacing:0.444px;">Validation</div><div class="t" style="left:553.7px;top:370px;font-size:23.5px;line-height:26px;font-weight:400;color:#c7860f;letter-spacing:0.444px;">Staging</div><div class="t" style="left:731.6px;top:370px;font-size:23.5px;line-height:26px;font-weight:400;color:#1f7a3a;letter-spacing:0.536px;">Production</div><div class="t" style="left:52.4px;top:451px;font-size:22.5px;line-height:25px;font-weight:700;color:#212b4d;letter-spacing:0.037px;">Version properties in</div><div class="t" style="left:295.0px;top:454px;font-size:18.5px;line-height:21px;font-weight:700;color:#6847e2;letter-spacing:0.547px;">Experimentation</div><div class="t" style="left:1397.0px;top:450px;font-size:23px;line-height:26px;font-weight:700;color:#f6c2c3;letter-spacing:-0.368px;">Delete</div><div class="t" style="left:1586.3px;top:450px;font-size:23px;line-height:26px;font-weight:700;color:#3b4563;letter-spacing:-0.080px;">Add</div><div class="t" style="left:122.4px;top:537px;font-size:22.5px;line-height:25px;font-weight:700;color:#3c4565;letter-spacing:0.255px;">Property</div><div class="t" style="left:1018.4px;top:537px;font-size:22.5px;line-height:25px;font-weight:700;color:#3c4565;letter-spacing:0.281px;">Value</div><div class="t" style="left:123.0px;top:587px;font-size:24px;line-height:27px;font-weight:400;color:#212b4d;letter-spacing:0.027px;">columntransformer</div><div class="t" style="left:1017.4px;top:588px;font-size:24px;line-height:27px;font-weight:400;color:#212b4d;letter-spacing:-0.128px;">ColumnTransformer(transformers=[('cat_cols', On...</div><div class="t" style="left:123.0px;top:644px;font-size:24px;line-height:27px;font-weight:400;color:#212b4d;letter-spacing:0.245px;">ridge</div><div class="t" style="left:1017.4px;top:644px;font-size:24px;line-height:27px;font-weight:400;color:#212b4d;letter-spacing:-0.450px;">Ridge()</div><div class="t" style="left:52.0px;top:760px;font-size:23.4px;line-height:26px;font-weight:700;color:#212b4d;letter-spacing:-0.374px;">Attachments in</div><div class="t" style="left:233.8px;top:764px;font-size:18.5px;line-height:21px;font-weight:700;color:#6847e2;letter-spacing:0.590px;">Experimentation</div><div class="t" style="left:76.0px;top:791px;font-size:20.7px;line-height:23px;font-weight:400;color:#6b7285;letter-spacing:-0.620px;">10 Files</div><div class="t" style="left:1587.2px;top:774px;font-size:23px;line-height:26px;font-weight:700;color:#3b4563;letter-spacing:-1.030px;">Add</div><div class="t" style="left:97.0px;top:1002px;font-size:20px;line-height:22px;font-weight:400;color:#212b4d;letter-spacing:0.414px;">Add-in (3).png</div><div class="t" style="left:346.5px;top:1002px;font-size:20px;line-height:22px;font-weight:400;color:#212b4d;letter-spacing:0.453px;">Add-in (4).png</div><div class="t" style="left:596.0px;top:1002px;font-size:20px;line-height:22px;font-weight:400;color:#212b4d;letter-spacing:0.453px;">Add-in (2).png</div><div class="t" style="left:846.0px;top:1002px;font-size:20px;line-height:22px;font-weight:400;color:#212b4d;letter-spacing:0.487px;">Add-in.png</div><div class="t" style="left:1096.0px;top:1002px;font-size:20px;line-height:22px;font-weight:400;color:#212b4d;letter-spacing:0.190px;">Template.csv</div><div class="t" style="left:1345.5px;top:1002px;font-size:20px;line-height:22px;font-weight:400;color:#212b4d;letter-spacing:0.348px;">Add-in.csv</div><div class="t" style="left:96.4px;top:1219px;font-size:20px;line-height:22px;font-weight:400;color:#212b4d;letter-spacing:0.107px;">gauge_chart.xlsx</div><div class="t" style="left:345.0px;top:1219px;font-size:20px;line-height:22px;font-weight:400;color:#212b4d;letter-spacing:0.310px;">burndown_chart...</div><div class="t" style="left:595.0px;top:1219px;font-size:20px;line-height:22px;font-weight:400;color:#212b4d;letter-spacing:0.182px;">Feature Importa...</div><div class="t" style="left:845.0px;top:1219px;font-size:20px;line-height:22px;font-weight:400;color:#212b4d;letter-spacing:0.218px;">model_pickle</div><div class="t" style="left:1779.6px;top:374px;font-size:21.2px;line-height:23px;font-weight:400;color:#6b7285;letter-spacing:-0.084px;">Model type</div><div class="t" style="left:1812.3px;top:407px;font-size:23.4px;line-height:26px;font-weight:400;color:#212b4d;letter-spacing:0.172px;">Other</div><div class="t" style="left:1779.6px;top:483px;font-size:21.2px;line-height:23px;font-weight:400;color:#6b7285;letter-spacing:-0.349px;">Model inventory ID</div><div class="t" style="left:1779.8px;top:532px;font-size:23.7px;line-height:26px;font-weight:400;color:#c4c8d0;letter-spacing:0.106px;">N/A</div><div class="t" style="left:1780.6px;top:607px;font-size:21.7px;line-height:25px;font-weight:400;color:#6b7285;letter-spacing:-0.689px;">Technique</div><div class="t" style="left:1779.8px;top:655px;font-size:24px;line-height:27px;font-weight:400;color:#212b4d;letter-spacing:-0.388px;">Ridge Regression</div><div class="t" style="left:1780.6px;top:725px;font-size:21.7px;line-height:25px;font-weight:400;color:#6b7285;letter-spacing:-0.932px;">Version ID</div><div class="t" style="left:1779.8px;top:758px;font-size:24px;line-height:27px;font-weight:400;color:#212b4d;letter-spacing:0.075px;">MDV-6</div><div class="t" style="left:1856.4px;top:842px;font-size:22.5px;line-height:25px;font-weight:700;color:#ffffff;letter-spacing:-0.064px;">Validation notebook</div><div class="t" style="left:1781.4px;top:925px;font-size:23.5px;line-height:26px;font-weight:700;color:#212b4d;letter-spacing:-0.396px;">Version description</div><div class="t" style="left:1780.4px;top:980px;font-size:23.5px;line-height:26px;font-weight:400;color:#c4c8d0;letter-spacing:0.389px;">No description</div><div class="t" style="left:1781.4px;top:1050px;font-size:23.5px;line-height:26px;font-weight:700;color:#212b4d;letter-spacing:-0.529px;">Contributors</div><div class="t" style="left:1801.9px;top:1107px;font-size:22.2px;line-height:25px;font-weight:400;color:#ffffff;letter-spacing:0.000px;">Y</div><div class="t" style="left:1781.4px;top:1201px;font-size:20.6px;line-height:23px;font-weight:700;color:#6b7285;letter-spacing:-0.635px;">Created 8 months ago by yesha</div><div class="t" style="left:1780.4px;top:1230px;font-size:20.6px;line-height:23px;font-weight:700;color:#6b7285;letter-spacing:-0.617px;">Updated 3 months ago by yesha</div></div>
</body></html>
